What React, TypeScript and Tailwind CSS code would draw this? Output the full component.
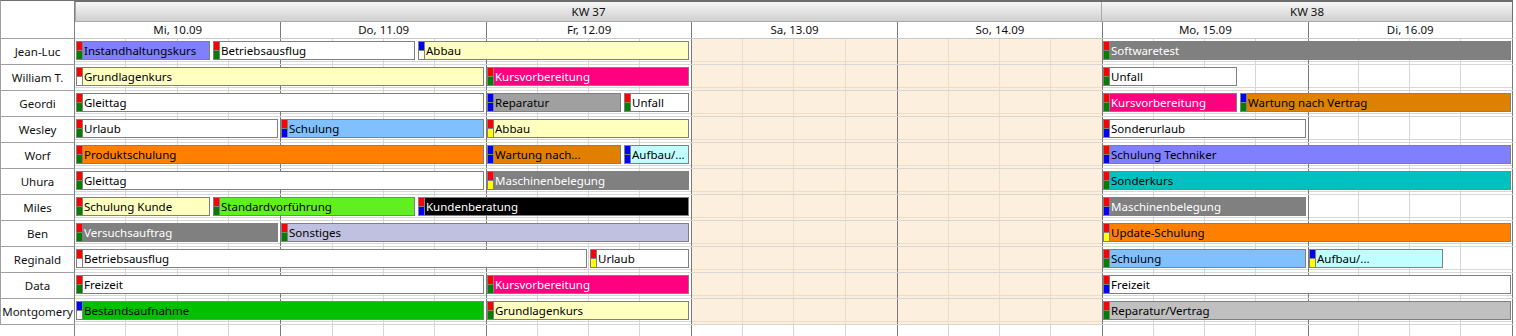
import React from "react";

const TL_W = 1438;
const DAY_W = TL_W / 7;

const DAYS = ["Mi, 10.09", "Do, 11.09", "Fr, 12.09", "Sa, 13.09", "So, 14.09", "Mo, 15.09", "Di, 16.09"];
const WEEKEND = new Set([3, 4]);

type Mark = "r" | "g" | "b" | "y" | "w";
interface Appt {
  text: string;
  from: number; // in days
  to: number;
  bg: string;
  fg?: string;
  mark: [Mark, Mark];
}

const MARK: Record<Mark, string> = {
  r: "bg-[#ff0000]",
  g: "bg-[#008000]",
  b: "bg-[#0000ff]",
  y: "bg-[#ffff00]",
  w: "bg-white",
};

const T = 2 / 3;
const WHITE_TXT = "text-white";

const ROWS: { name: string; appts: Appt[] }[] = [
  {
    name: "Jean-Luc",
    appts: [
      { text: "Instandhaltungskurs", from: 0, to: T, bg: "bg-[#8080ff]", mark: ["r", "g"] },
      { text: "Betriebsausflug", from: T, to: 1 + T, bg: "bg-white", mark: ["r", "g"] },
      { text: "Abbau", from: 1 + T, to: 3, bg: "bg-[#ffffc0]", mark: ["b", "w"] },
      { text: "Softwaretest", from: 5, to: 7, bg: "bg-[#808080]", fg: WHITE_TXT, mark: ["r", "g"] },
    ],
  },
  {
    name: "William T.",
    appts: [
      { text: "Grundlagenkurs", from: 0, to: 2, bg: "bg-[#ffffc0]", mark: ["r", "w"] },
      { text: "Kursvorbereitung", from: 2, to: 3, bg: "bg-[#ff0080]", fg: WHITE_TXT, mark: ["r", "g"] },
      { text: "Unfall", from: 5, to: 5 + T, bg: "bg-white", mark: ["r", "g"] },
    ],
  },
  {
    name: "Geordi",
    appts: [
      { text: "Gleittag", from: 0, to: 2, bg: "bg-white", mark: ["r", "g"] },
      { text: "Reparatur", from: 2, to: 2 + T, bg: "bg-[#a0a0a0]", mark: ["b", "b"] },
      { text: "Unfall", from: 2 + T, to: 3, bg: "bg-white", mark: ["r", "g"] },
      { text: "Kursvorbereitung", from: 5, to: 5 + T, bg: "bg-[#ff0080]", fg: WHITE_TXT, mark: ["r", "g"] },
      { text: "Wartung nach Vertrag", from: 5 + T, to: 7, bg: "bg-[#e08000]", mark: ["b", "g"] },
    ],
  },
  {
    name: "Wesley",
    appts: [
      { text: "Urlaub", from: 0, to: 1, bg: "bg-white", mark: ["r", "g"] },
      { text: "Schulung", from: 1, to: 2, bg: "bg-[#80c0ff]", mark: ["r", "b"] },
      { text: "Abbau", from: 2, to: 3, bg: "bg-[#ffffc0]", mark: ["r", "y"] },
      { text: "Sonderurlaub", from: 5, to: 6, bg: "bg-white", mark: ["r", "b"] },
    ],
  },
  {
    name: "Worf",
    appts: [
      { text: "Produktschulung", from: 0, to: 2, bg: "bg-[#ff8000]", mark: ["r", "g"] },
      { text: "Wartung nach...", from: 2, to: 2 + T, bg: "bg-[#e08000]", mark: ["b", "b"] },
      { text: "Aufbau/...", from: 2 + T, to: 3, bg: "bg-[#c0ffff]", mark: ["b", "b"] },
      { text: "Schulung Techniker", from: 5, to: 7, bg: "bg-[#8080ff]", mark: ["r", "b"] },
    ],
  },
  {
    name: "Uhura",
    appts: [
      { text: "Gleittag", from: 0, to: 2, bg: "bg-white", mark: ["r", "g"] },
      { text: "Maschinenbelegung", from: 2, to: 3, bg: "bg-[#808080]", fg: WHITE_TXT, mark: ["r", "y"] },
      { text: "Sonderkurs", from: 5, to: 7, bg: "bg-[#00c0c0]", mark: ["r", "g"] },
    ],
  },
  {
    name: "Miles",
    appts: [
      { text: "Schulung Kunde", from: 0, to: T, bg: "bg-[#ffffc0]", mark: ["r", "g"] },
      { text: "Standardvorführung", from: T, to: 1 + T, bg: "bg-[#60f020]", mark: ["r", "g"] },
      { text: "Kundenberatung", from: 1 + T, to: 3, bg: "bg-black", fg: WHITE_TXT, mark: ["r", "b"] },
      { text: "Maschinenbelegung", from: 5, to: 6, bg: "bg-[#808080]", fg: WHITE_TXT, mark: ["r", "b"] },
    ],
  },
  {
    name: "Ben",
    appts: [
      { text: "Versuchsauftrag", from: 0, to: 1, bg: "bg-[#808080]", fg: WHITE_TXT, mark: ["r", "g"] },
      { text: "Sonstiges", from: 1, to: 3, bg: "bg-[#c0c0e0]", mark: ["r", "g"] },
      { text: "Update-Schulung", from: 5, to: 7, bg: "bg-[#ff8000]", mark: ["r", "y"] },
    ],
  },
  {
    name: "Reginald",
    appts: [
      { text: "Betriebsausflug", from: 0, to: 2.5, bg: "bg-white", mark: ["r", "w"] },
      { text: "Urlaub", from: 2.5, to: 3, bg: "bg-white", mark: ["r", "y"] },
      { text: "Schulung", from: 5, to: 6, bg: "bg-[#80c0ff]", mark: ["r", "g"] },
      { text: "Aufbau/...", from: 6, to: 6 + T, bg: "bg-[#c0ffff]", mark: ["b", "y"] },
    ],
  },
  {
    name: "Data",
    appts: [
      { text: "Freizeit", from: 0, to: 2, bg: "bg-white", mark: ["r", "g"] },
      { text: "Kursvorbereitung", from: 2, to: 3, bg: "bg-[#ff0080]", fg: WHITE_TXT, mark: ["r", "g"] },
      { text: "Freizeit", from: 5, to: 7, bg: "bg-white", mark: ["r", "b"] },
    ],
  },
  {
    name: "Montgomery",
    appts: [
      { text: "Bestandsaufnahme", from: 0, to: 2, bg: "bg-[#00c000]", mark: ["b", "w"] },
      { text: "Grundlagenkurs", from: 2, to: 3, bg: "bg-[#ffffc0]", mark: ["r", "g"] },
      { text: "Reparatur/Vertrag", from: 5, to: 7, bg: "bg-[#c0c0c0]", mark: ["r", "g"] },
    ],
  },
];

function cn(...c: (string | false | undefined)[]) {
  return c.filter(Boolean).join(" ");
}

const DayCell: React.FC<{ i: number; withInner?: boolean }> = ({ i, withInner = true }) => {
  const weekend = WEEKEND.has(i) && withInner;
  return (
    <div
      className={cn(
        "grid h-full grid-cols-4",
        i > 0 && "border-l border-[#7a7a7a]",
        i === 6 && "border-r border-[#7a7a7a]",
        weekend && "bg-[#fdefdd]"
      )}
    >
      {[0, 1, 2, 3].map((j) => (
        <div
          key={j}
          className={cn(
            "flex h-full flex-col",
            j < 3 && "border-r",
            weekend ? "border-[#eedcc6]" : "border-[#d6d6d6]"
          )}
        >
          {withInner && (
            <div className={cn("h-[23px] border-b", weekend ? "border-[#eedcc6]" : "border-[#d6d6d6]")} />
          )}
        </div>
      ))}
    </div>
  );
};

const Bar: React.FC<{ a: Appt }> = ({ a }) => {
  const x0 = Math.round(a.from * DAY_W);
  const x1 = Math.round(a.to * DAY_W);
  return (
    <div
      className={cn("absolute top-[2px] flex h-[19px] overflow-hidden border border-[#808080]", a.bg, a.fg ?? "text-black")}
      style={{ left: x0 + 1, width: x1 - x0 - 3 }}
    >
      <div className="flex w-[6px] shrink-0 flex-col gap-px border-r border-[#808080] bg-[#808080]">
        <div className={cn("flex-1", MARK[a.mark[0]])} />
        <div className={cn("flex-1", MARK[a.mark[1]])} />
      </div>
      <span className="whitespace-nowrap pl-[1px] text-[11.5px] leading-[17px]">{a.text}</span>
    </div>
  );
};

export default function App() {
  return (
    <div className="h-[336px] w-[1516px] overflow-hidden bg-white font-['Noto_Sans',sans-serif] text-[11.5px] text-[#111]">
      {/* Header */}
      <div className="flex h-[39px]">
        <div className="w-[75px] shrink-0 border-t border-l border-r border-b border-t-[#707070] border-l-[#a0a0a0] border-r-[#808080] border-b-[#a0a0a0]" />
        <div className="flex w-[1438px] flex-col">
          <div className="flex h-[22px] border-t-2 border-[#6e6e6e]">
            <div className="flex flex-[5] items-center justify-center border-x border-b border-[#a8a8a8] bg-linear-to-b from-[#f6f6f6] to-[#d0d0d0]">
              KW 37
            </div>
            <div className="flex flex-[2] items-center justify-center border-r border-b border-[#a8a8a8] border-r-[#6e6e6e] bg-linear-to-b from-[#f6f6f6] to-[#d0d0d0]">
              KW 38
            </div>
          </div>
          <div className="grid h-[17px] grid-cols-7 border-b border-[#c8c8c8]">
            {DAYS.map((d, i) => (
              <div
                key={d}
                className={cn(
                  "flex items-center justify-center leading-none",
                  i > 0 && "border-l border-[#7a7a7a]",
                  i === 6 && "border-r border-[#7a7a7a]"
                )}
              >
                {d}
              </div>
            ))}
          </div>
        </div>
      </div>

      {/* Rows */}
      {ROWS.map((r) => (
        <div key={r.name} className="flex h-[26px]">
          <div className="flex w-[75px] shrink-0 items-center justify-center border-x border-b border-[#a0a0a0] border-r-[#808080]">
            {r.name}
          </div>
          <div className="relative grid w-[1438px] grid-cols-7 border-b border-[#d6d6d6]">
            {DAYS.map((d, i) => (
              <DayCell key={d} i={i} />
            ))}
            {r.appts.map((a, k) => (
              <Bar key={k} a={a} />
            ))}
          </div>
        </div>
      ))}

      {/* Empty filler */}
      <div className="flex h-[12px]">
        <div className="w-[75px] shrink-0 border-r border-[#808080]" />
        <div className="grid w-[1438px] grid-cols-7">
          {DAYS.map((d, i) => (
            <DayCell key={d} i={i} withInner={false} />
          ))}
        </div>
      </div>
    </div>
  );
}
